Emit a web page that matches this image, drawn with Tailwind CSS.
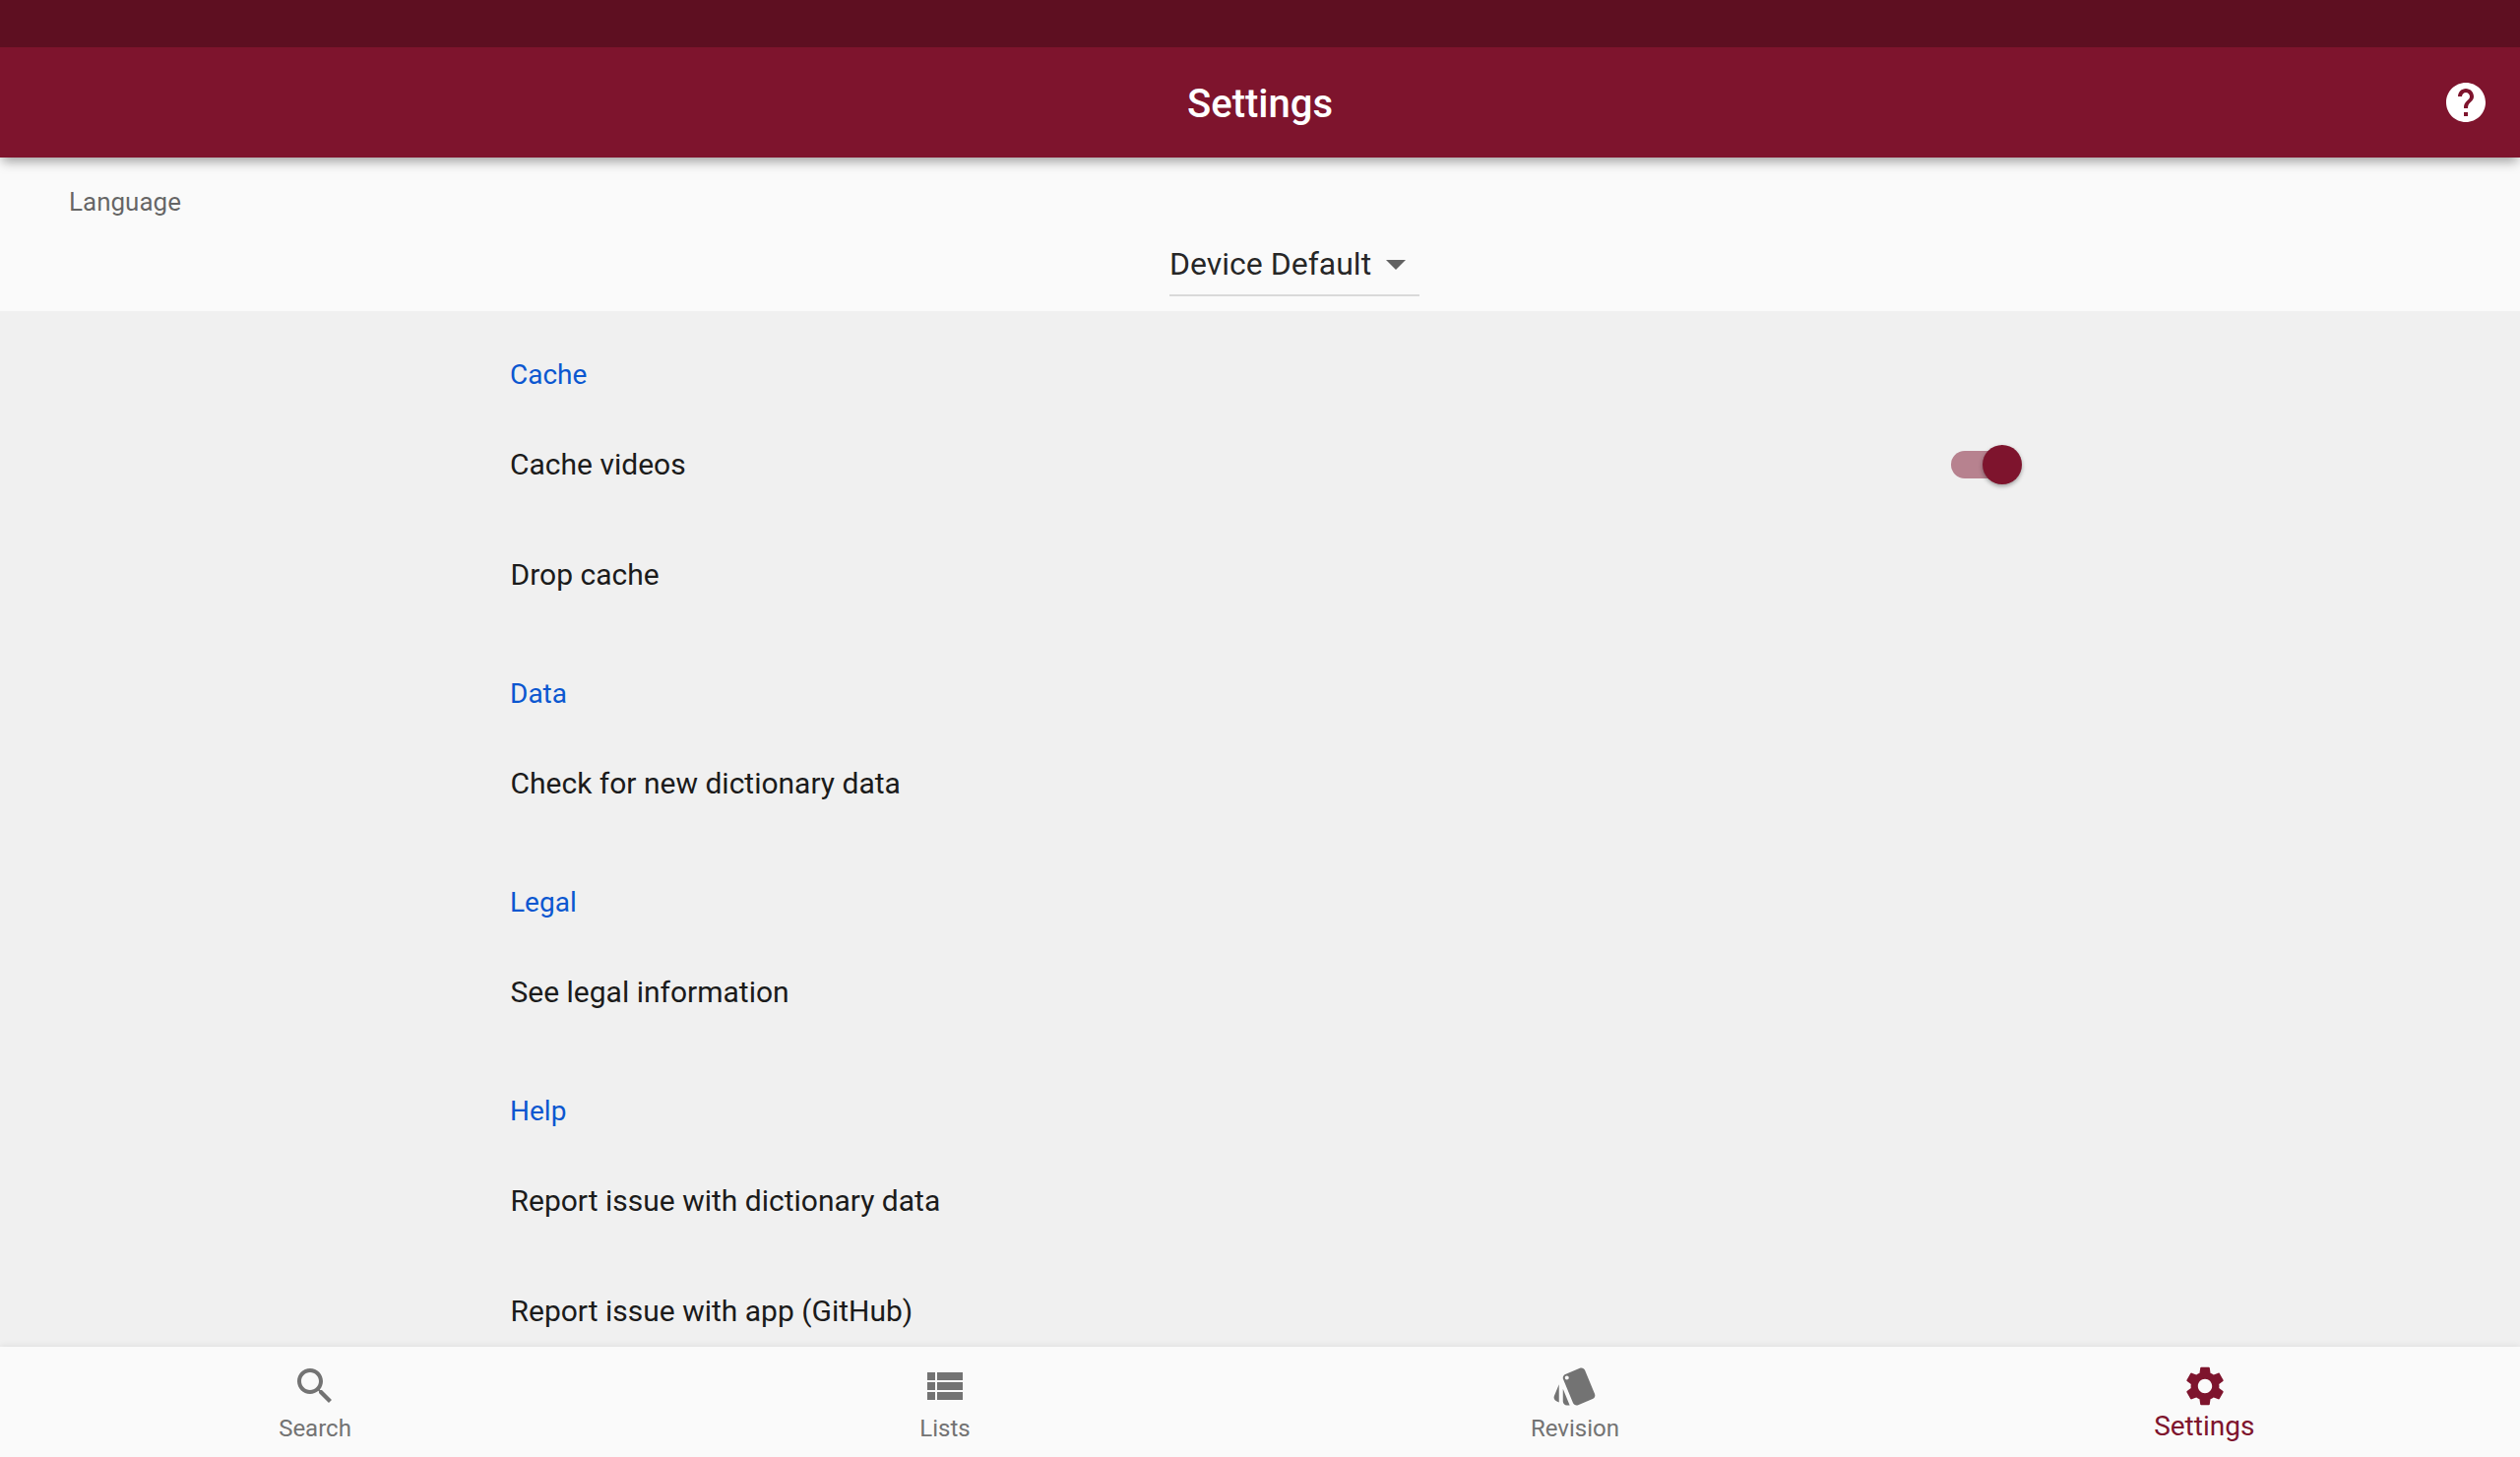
<!DOCTYPE html>
<html lang="en">
<head>
<meta charset="utf-8">
<title>Settings</title>
<script src="https://cdn.jsdelivr.net/npm/@tailwindcss/browser@4"></script>
</head>
<body class="font-[Roboto,sans-serif]">
<div class="flex h-[1480px] w-[2560px] flex-col overflow-hidden bg-[#fafafa]">
  <header class="relative z-10 shrink-0 bg-[#7e142d] shadow-[0_6px_11px_-2px_rgba(0,0,0,0.37)]">
    <div class="h-12 bg-black/25"></div>
    <div class="grid h-28 grid-cols-[1fr_auto_1fr] items-start">
      <div></div>
      <h1 class="pt-[34px] text-[40px] leading-[47px] font-medium text-white">Settings</h1>
      <button class="mt-8 mr-[31px] justify-self-end" aria-label="Help">
        <svg class="size-12 fill-white" viewBox="0 0 24 24"><path d="M12 2C6.48 2 2 6.48 2 12s4.48 10 10 10 10-4.48 10-10S17.52 2 12 2zm1 17h-2v-2h2v2zm2.07-7.75l-.9.92C13.45 12.9 13 13.5 13 15h-2v-.5c0-1.1.45-2.1 1.17-2.83l1.24-1.26c.37-.36.59-.86.59-1.41 0-1.1-.9-2-2-2s-2 .9-2 2H8c0-2.21 1.79-4 4-4s4 1.79 4 4c0 .88-.36 1.68-.93 2.25z"/></svg>
      </button>
    </div>
  </header>

  <section class="h-[156px] shrink-0 pt-[30px]">
    <div class="pl-[70px] text-[26px] leading-[30px] text-black/60">Language</div>
    <div class="mt-6 ml-[1188px] flex h-[57px] w-[254px] items-start justify-between border-b-2 border-[#d9d9d9]">
      <span class="pt-[5px] text-[32px] leading-[38px] whitespace-nowrap text-black/87">Device Default</span>
      <svg class="size-12 shrink-0 fill-[#616161]" viewBox="0 0 24 24"><path d="M7 10l5 5 5-5z"/></svg>
    </div>
  </section>

  <main class="min-h-0 flex-1 overflow-hidden bg-[#f0f0f0] pr-[512px] pl-[518px] text-[30px] leading-[35px] text-[#1b1b1b]">
    <h2 class="h-[100px] pt-12 text-[28px] leading-[33px] text-[#0b57d0]">Cache</h2>
    <div class="flex h-28 justify-between">
      <span class="pt-[38px]">Cache videos</span>
      <span class="mt-[42px] flex h-7 w-[66px] items-center rounded-full bg-[#7e142d]/50">
        <span class="ml-8 size-10 shrink-0 rounded-full bg-[#7e142d] shadow-[0_2px_4px_rgba(0,0,0,0.35)]"></span>
      </span>
    </div>
    <div class="h-28 pt-[38px] pl-[0.5px]">Drop cache</div>
    <h2 class="h-[100px] pt-12 text-[28px] leading-[33px] text-[#0b57d0]">Data</h2>
    <div class="h-28 pt-[38px] pl-[0.5px]">Check for new dictionary data</div>
    <h2 class="h-[100px] pt-12 text-[28px] leading-[33px] text-[#0b57d0]">Legal</h2>
    <div class="h-28 pt-[38px] pl-[0.5px]">See legal information</div>
    <h2 class="h-[100px] pt-12 text-[28px] leading-[33px] text-[#0b57d0]">Help</h2>
    <div class="h-28 pt-[38px] pl-[0.5px]">Report issue with dictionary data</div>
    <div class="h-28 pt-[38px] pl-[0.5px]">Report issue with app (GitHub)</div>
  </main>

  <nav class="relative z-10 grid h-28 shrink-0 grid-cols-4 bg-[#fafafa] fill-[#737373] text-[24px] leading-7 text-[#737373] shadow-[0_-1px_7px_rgba(0,0,0,0.08)]">
    <a class="flex flex-col items-center pt-4">
      <svg class="size-12" viewBox="0 0 24 24"><path d="M15.5 14h-.79l-.28-.27C15.41 12.59 16 11.11 16 9.5 16 5.91 13.09 3 9.5 3S3 5.91 3 9.5 5.91 16 9.5 16c1.61 0 3.09-.59 4.23-1.57l.27.28v.79l5 4.99L20.49 19l-4.99-5zm-6 0C7.01 14 5 11.99 5 9.5S7.01 5 9.5 5 14 7.01 14 9.5 11.99 14 9.5 14z"/></svg>
      <span class="pt-[5px]">Search</span>
    </a>
    <a class="flex flex-col items-center pt-4">
      <svg class="size-12" viewBox="0 0 24 24"><path d="M3 14h4v-4H3v4zm0 5h4v-4H3v4zM3 9h4V5H3v4zm5 5h13v-4H8v4zm0 5h13v-4H8v4zM8 5v4h13V5H8z"/></svg>
      <span class="pt-[5px]">Lists</span>
    </a>
    <a class="flex flex-col items-center pt-4">
      <svg class="size-12" viewBox="0 0 24 24"><path d="M2.53 19.65l1.34.56v-9.03l-2.43 5.86c-.41 1.02.08 2.19 1.09 2.61zm19.5-3.7L17.07 3.98c-.31-.75-1.04-1.21-1.81-1.23-.26 0-.53.04-.79.15L7.1 5.95c-.75.31-1.21 1.03-1.23 1.8-.01.27.04.54.15.8l4.96 11.97c.31.76 1.05 1.22 1.83 1.23.26 0 .52-.05.77-.15l7.36-3.05c1.02-.42 1.51-1.59 1.09-2.6zM7.88 8.75c-.55 0-1-.45-1-1s.45-1 1-1 1 .45 1 1-.45 1-1 1zm-2 11c0 1.1.9 2 2 2h1.45l-3.45-8.34v6.34z"/></svg>
      <span class="pt-[5px]">Revision</span>
    </a>
    <a class="flex flex-col items-center fill-[#7e142d] pt-4 text-[28px] leading-[33px] text-[#7e142d]">
      <svg class="size-12" viewBox="0 0 24 24"><path d="M19.14 12.94c.04-.3.06-.61.06-.94 0-.32-.02-.64-.07-.94l2.03-1.58c.18-.14.23-.41.12-.61l-1.92-3.32c-.12-.22-.37-.29-.59-.22l-2.39.96c-.5-.38-1.03-.7-1.62-.94l-.36-2.54c-.04-.24-.24-.41-.48-.41h-3.84c-.24 0-.43.17-.47.41l-.36 2.54c-.59.24-1.13.57-1.62.94l-2.39-.96c-.22-.08-.47 0-.59.22L2.74 8.87c-.12.21-.08.47.12.61l2.03 1.58c-.05.3-.09.63-.09.94s.02.64.07.94l-2.03 1.58c-.18.14-.23.41-.12.61l1.92 3.32c.12.22.37.29.59.22l2.39-.96c.5.38 1.03.7 1.62.94l.36 2.54c.05.24.24.41.48.41h3.84c.24 0 .44-.17.47-.41l.36-2.54c.59-.24 1.13-.56 1.62-.94l2.39.96c.22.08.47 0 .59-.22l1.92-3.32c.12-.22.07-.47-.12-.61l-2.01-1.58zM12 15.6c-1.98 0-3.6-1.62-3.6-3.6s1.62-3.6 3.6-3.6 3.6 1.62 3.6 3.6-1.62 3.6-3.6 3.6z"/></svg>
      <span class="pr-[1.5px]">Settings</span>
    </a>
  </nav>
</div>
</body>
</html>
